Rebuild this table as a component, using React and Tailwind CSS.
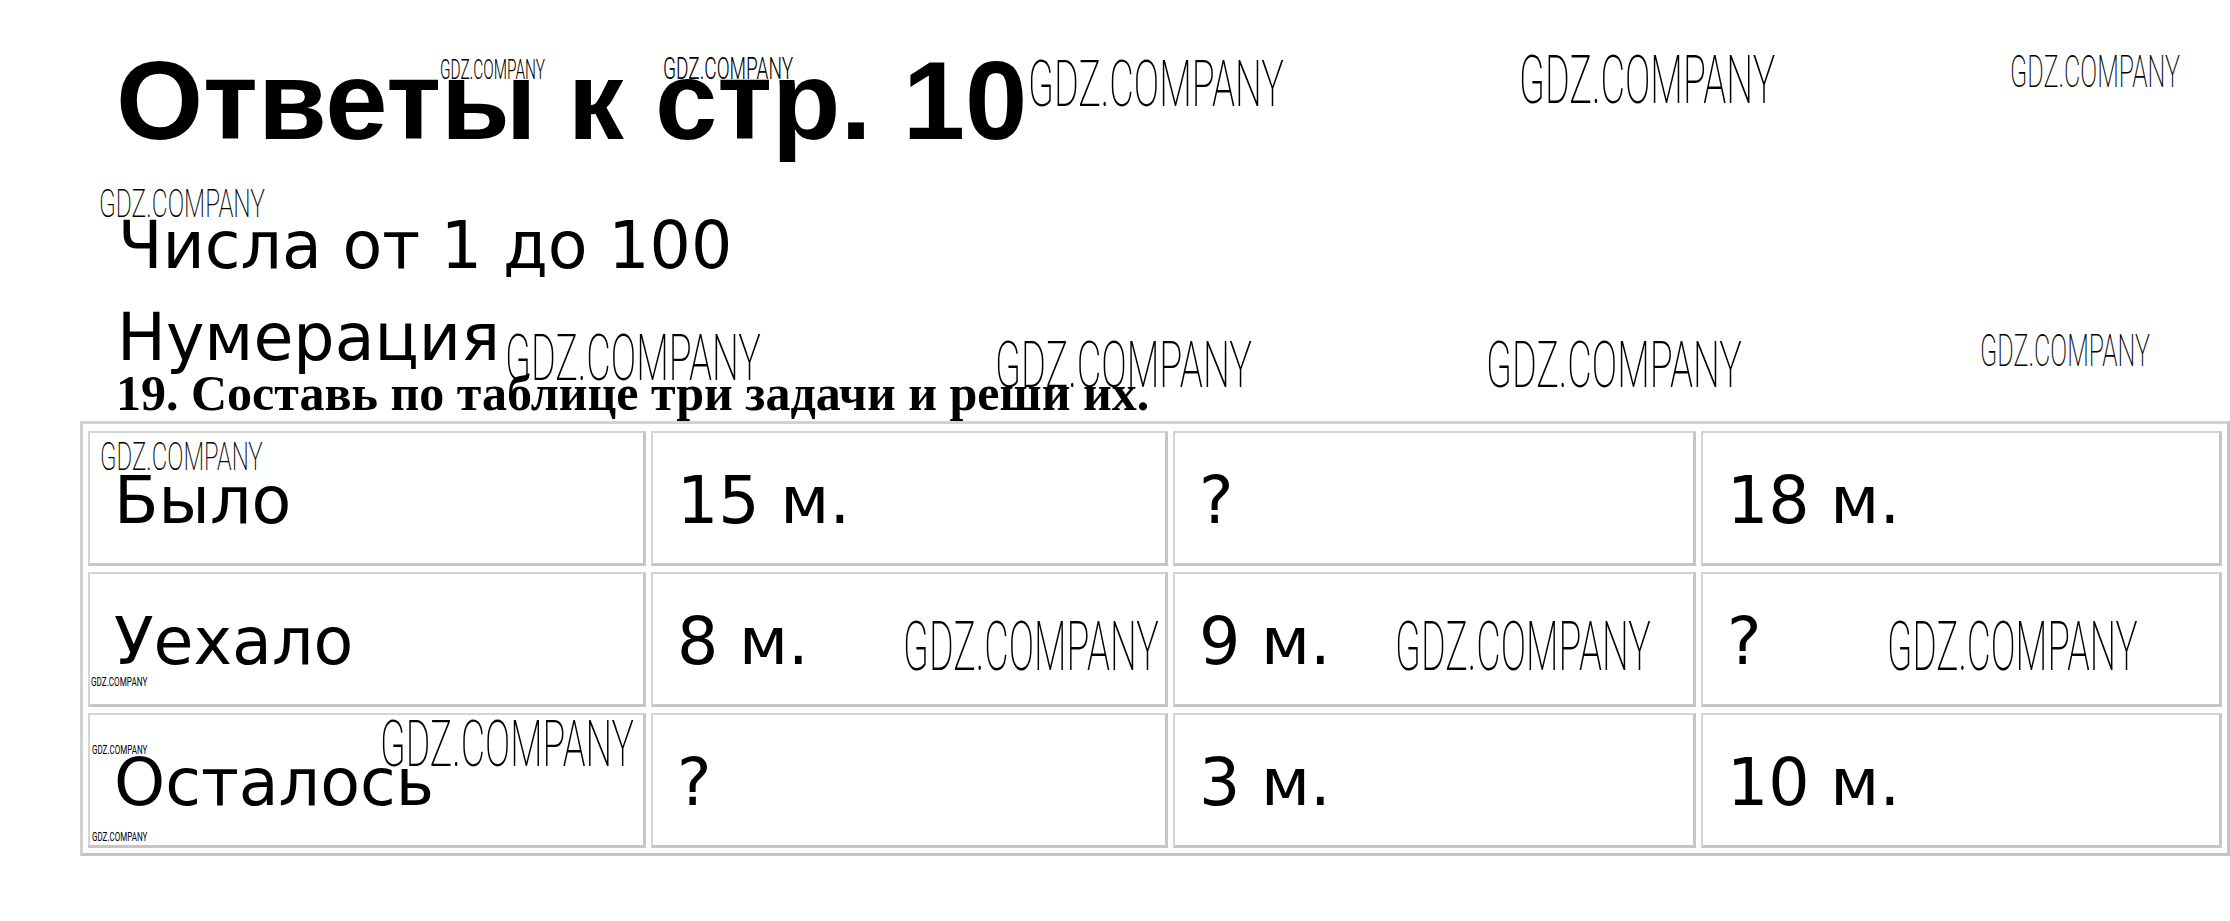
import React, { useLayoutEffect, useRef, useState } from "react";

const marks = [
  [440, 60, 105, 20],
  [663, 58, 130, 22],
  [1028, 60, 256, 46],
  [1519, 57, 256, 47],
  [2010, 57, 170, 31],
  [99, 191, 166, 27],
  [505, 334, 256, 46],
  [995, 341, 257, 46],
  [1486, 341, 256, 46],
  [1980, 336, 170, 31],
  [100, 442, 163, 28],
  [903, 622, 256, 49],
  [1395, 622, 256, 49],
  [1887, 622, 251, 49],
  [91, 678, 56, 9],
  [92, 746, 55, 9],
  [92, 833, 55, 9],
  [380, 720, 254, 46],
];

function Wm({ x, y, w, h }) {
  const ref = useRef(null);
  const [sx, setSx] = useState(1);
  const fs = h / 0.711;
  useLayoutEffect(() => {
    if (ref.current) {
      const nat = ref.current.offsetWidth;
      if (nat > 0) setSx(w / nat);
    }
  }, [w, h]);
  return (
    <span
      ref={ref}
      className="absolute whitespace-nowrap leading-none text-black font-['Roboto',sans-serif] origin-top-left pointer-events-none select-none"
      style={{ left: x, top: y - 0.131 * fs, fontSize: fs, fontWeight: h < 15 ? 400 : h < 25 ? 300 : 200, transform: `scaleX(${sx})` }}
    >
      GDZ.COMPANY
    </span>
  );
}

const rows = [
  ["Было", "15 м.", "?", "18 м."],
  ["Уехало", "8 м.", "9 м.", "?"],
  ["Осталось", "?", "3 м.", "10 м."],
];

export default function App() {
  return (
    <div className="relative w-[2230px] h-[921px] bg-white overflow-hidden text-black">
      <div className="flex flex-col">
        <h1 className="mt-[45px] pl-[116px] font-['Liberation_Sans',Arial,sans-serif] font-bold text-[112px] leading-[112px]">
          Ответы к стр. 10
        </h1>
        <div className="mt-[56px] pl-[118px] font-['DejaVu_Sans',Verdana,sans-serif] text-[65px] leading-[65px]">
          Числа от 1 до 100
        </div>
        <div className="mt-[27px] pl-[117px] font-['DejaVu_Sans',Verdana,sans-serif] text-[65px] leading-[65px]">
          Нумерация
        </div>
        <div className="-mt-[2px] pl-[116px] font-['Liberation_Serif','Times_New_Roman',serif] font-bold text-[50px] leading-[50px]">
          19. Составь по таблице три задачи и реши их.
        </div>
        <div className="mt-[3px] ml-[80px] w-[2150px] border-[3px] border-t-[#d2d2d2] border-l-[#d2d2d2] border-b-[#c4c4c4] border-r-[#c4c4c4] pt-[7px] pb-[5px] px-[5px]">
          <div className="grid grid-cols-[558px_517px_523px_521px] gap-x-[5px] gap-y-[6px]">
            {rows.map((r, i) =>
              r.map((c, j) => (
                <div
                  key={i + "-" + j}
                  className="h-[135px] flex items-center pt-[5px] pl-[24px] border-2 border-t-[#d4d4d4] border-l-[#d4d4d4] border-b-[3px] border-r-[3px] border-b-[#c6c6c6] border-r-[#c6c6c6] font-['DejaVu_Sans',Verdana,sans-serif] text-[65px] leading-[65px] whitespace-nowrap"
                >
                  {c}
                </div>
              ))
            )}
          </div>
        </div>
      </div>
      {marks.map((m, i) => (
        <Wm key={i} x={m[0]} y={m[1]} w={m[2]} h={m[3]} />
      ))}
    </div>
  );
}
